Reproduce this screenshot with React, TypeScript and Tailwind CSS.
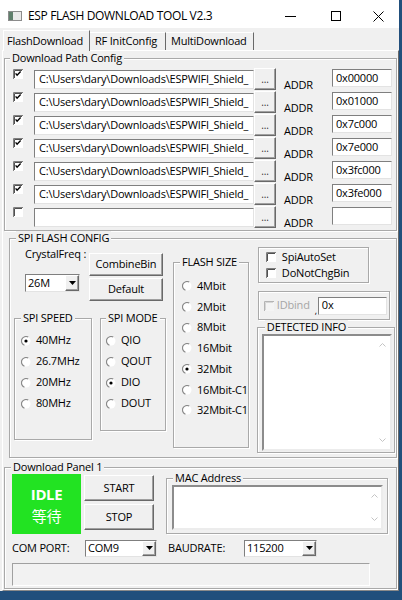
import React from "react";

const raised =
  "bg-[#f0f0f0] border border-t-white border-l-white border-r-[#696969] border-b-[#696969] shadow-[inset_-1px_-1px_0_#a0a0a0]";
const sunken =
  "bg-white border border-t-[#7f7f7f] border-l-[#7f7f7f] border-r-[#e3e3e3] border-b-[#e3e3e3]";
const deep =
  "bg-white border-2 border-t-[#8c8c8c] border-l-[#8c8c8c] border-r-[#ececec] border-b-[#ececec]";
const etched = "border border-[#a9a9a9] shadow-[inset_1px_1px_0_#fff,1px_1px_0_#fff]";

const PATH = "C:\\Users\\dary\\Downloads\\ESPWIFI_Shield_";
const ROWS = [
  { on: true, path: PATH, addr: "0x00000" },
  { on: true, path: PATH, addr: "0x01000" },
  { on: true, path: PATH, addr: "0x7c000" },
  { on: true, path: PATH, addr: "0x7e000" },
  { on: true, path: PATH, addr: "0x3fc000" },
  { on: true, path: PATH, addr: "0x3fe000" },
  { on: false, path: "", addr: "" },
];

function Check({ on = false, dim = false }: { on?: boolean; dim?: boolean }) {
  return (
    <svg width="10" height="10" viewBox="0 0 10 10" className="block shrink-0">
      <rect width="10" height="10" fill={dim ? "#f4f4f4" : "#fff"} />
      <path d="M0.5 10V0.5H10" fill="none" stroke={dim ? "#b4b4b4" : "#808080"} />
      <path d="M1.5 9V1.5H9" fill="none" stroke={dim ? "#d6d6d6" : "#505050"} />
      {on && <path d="M2.6 4.4L4.1 6.2L7.6 2.6" fill="none" stroke="#000" strokeWidth="1.4" />}
    </svg>
  );
}

function Radio({ on = false }: { on?: boolean }) {
  return (
    <svg width="10" height="10" viewBox="0 0 10 10" className="block shrink-0">
      <circle cx="5" cy="5" r="4.5" fill="#fff" />
      <path d="M7.25 1.1A4.5 4.5 0 1 0 3.46 9.23" fill="none" stroke="#8a8a8a" strokeWidth="1.2" />
      {on && <circle cx="5" cy="5" r="1.6" fill="#000" />}
    </svg>
  );
}

function Group({
  label,
  lm,
  className = "",
  children,
}: {
  label: string;
  lm: string;
  className?: string;
  children?: React.ReactNode;
}) {
  return (
    <fieldset className={`${etched} shrink-0 ${className}`}>
      <legend className={`${lm} px-[2px] leading-[14px] bg-[#f0f0f0]`}>{label}</legend>
      {children}
    </fieldset>
  );
}

function Combo({ value, className = "" }: { value: string; className?: string }) {
  return (
    <div className={`${sunken} flex items-stretch ${className}`}>
      <span className="flex-1 pl-[2px] flex items-center">{value}</span>
      <span className={`${raised} w-[14px] flex items-center justify-center`}>
        <svg width="7" height="4" viewBox="0 0 7 4">
          <path d="M0 0H7L3.5 4Z" fill="#000" />
        </svg>
      </span>
    </div>
  );
}

function ScrollBox({ className = "" }: { className?: string }) {
  return (
    <div className={`${deep} flex justify-end ${className}`}>
      <div className="w-[14px] h-full flex flex-col justify-between items-center py-[7px]">
        <svg width="7" height="4" viewBox="0 0 7 4">
          <path d="M0.5 3.5L3.5 0.5L6.5 3.5" fill="none" stroke="#c4c4c4" />
        </svg>
        <svg width="7" height="4" viewBox="0 0 7 4">
          <path d="M0.5 0.5L3.5 3.5L6.5 0.5" fill="none" stroke="#c4c4c4" />
        </svg>
      </div>
    </div>
  );
}

function RadioList({ items, sel, ml, h, pt }: { items: string[]; sel: string; ml: string; h: string; pt: string }) {
  return (
    <div className={`flex flex-col ${pt}`}>
      {items.map((t) => (
        <div key={t} className={`flex items-center ${h} ${ml}`}>
          <Radio on={t === sel} />
          <span className="ml-[5px] whitespace-nowrap">{t}</span>
        </div>
      ))}
    </div>
  );
}

export default function App() {
  return (
    <div className="w-[402px] h-[600px] overflow-hidden bg-[#f0f0f0] flex flex-col border-r-[3px] border-b-[9px] border-r-[#214f7c] border-b-[#214f7c] text-[11px] text-black font-['Open_Sans','Noto_Sans_CJK_SC',sans-serif] tracking-[-0.2px]">
      {/* title bar */}
      <div className="h-[28px] shrink-0 bg-white flex items-center pt-[4px]">
        <svg width="14" height="10" viewBox="0 0 14 10" className="ml-[8px]">
          <rect x="0.5" y="0.5" width="13" height="9" fill="#e9e9e9" stroke="#8c8c8c" />
          <rect x="1" y="1" width="4" height="8" fill="#5f7f6c" />
        </svg>
        <span className="ml-[6px] text-[12px] tracking-[-0.35px] leading-[16px]">ESP FLASH DOWNLOAD TOOL V2.3</span>
        <div className="ml-auto flex items-center mr-[15px]">
          <span className="w-[11px] h-px bg-black" />
          <span className="ml-[35px] w-[10px] h-[10px] border border-black" />
          <svg width="11" height="11" viewBox="0 0 11 11" className="ml-[32px]">
            <path d="M0.5 0.5L10.5 10.5M10.5 0.5L0.5 10.5" stroke="#000" strokeWidth="1" />
          </svg>
        </div>
      </div>

      {/* tabs */}
      <div className="h-[22px] shrink-0 flex items-end pl-[3px]">
        <div className="relative z-10 -mb-px h-[21px] w-[87px] bg-[#f0f0f0] border-l border-t border-r border-l-white border-t-white border-r-[#696969] pl-[3px] flex items-center leading-[14px]">
          FlashDownload
        </div>
        <div className="h-[18px] w-[76px] border-t border-r border-t-white border-r-[#696969] pl-[5px] pb-[2px] flex items-center leading-[14px]">
          RF InitConfig
        </div>
        <div className="h-[18px] w-[88px] border-t border-r border-t-white border-r-[#696969] pl-[5px] pb-[2px] flex items-center leading-[14px]">
          MultiDownload
        </div>
      </div>

      {/* tab page */}
      <div className="flex-1 ml-[2px] w-[397px] border border-t-white border-l-white border-r-[#696969] border-b-[#8a8a8a] flex flex-col">
        <Group label="Download Path Config" lm="ml-[5px]" className="ml-[1px] w-[393px] pt-[3px] pb-px">
          {ROWS.map((r, i) => (
            <div key={i} className="flex items-start h-[23px]">
              <div className="ml-[8px] mt-[1px]">
                <Check on={r.on} />
              </div>
              <div className={`${sunken} ml-[11px] mt-[2px] w-[220px] h-[19px] pl-[4px] flex items-center overflow-hidden whitespace-nowrap`}>
                {r.path}
              </div>
              <div className={`${raised} w-[22px] h-[22px] flex items-center justify-center text-[10px] text-[#333]`}>...</div>
              <div className="w-[56px] pl-[8px] mt-[10px] leading-[14px]">ADDR</div>
              <div className={`${sunken} w-[60px] h-[18px] mt-[1px] pl-[3px] flex items-center`}>{r.addr}</div>
            </div>
          ))}
        </Group>

        <Group label="SPI FLASH CONFIG" lm="ml-[6px]" className="ml-[6px] w-[388px] h-[227px]">
          <div className="flex items-start">
            {/* left part */}
            <div className="w-[163px] flex flex-col">
              <div className="h-[66px] flex items-start">
                <div className="ml-[15px] w-[64px] flex flex-col">
                  <span className="mt-[2px] leading-[14px] whitespace-nowrap">CrystalFreq :</span>
                  <Combo value="26M" className="mt-[13px] w-[55px] h-[18px]" />
                </div>
                <div className="w-[74px] flex flex-col">
                  <div className={`${raised} mt-[8px] h-[23px] flex items-center justify-center`}>CombineBin</div>
                  <div className={`${raised} mt-[2px] h-[23px] flex items-center justify-center`}>Default</div>
                </div>
              </div>
              <div className="flex items-start">
                <Group label="SPI SPEED" lm="ml-[6px]" className="ml-[4px] w-[78px] h-[129px]">
                  <RadioList items={["40MHz", "26.7MHz", "20MHz", "80MHz"]} sel="40MHz" ml="ml-[6px]" h="h-[21px]" pt="pt-[5px]" />
                </Group>
                <Group label="SPI MODE" lm="ml-[5px]" className="ml-[8px] w-[66px] h-[120px]">
                  <RadioList items={["QIO", "QOUT", "DIO", "DOUT"]} sel="DIO" ml="ml-[5px]" h="h-[21px]" pt="pt-[5px]" />
                </Group>
              </div>
            </div>

            {/* flash size */}
            <Group label="FLASH SIZE" lm="ml-[6px]" className="mt-[10px] w-[74px] h-[193px]">
              <RadioList
                items={["4Mbit", "2Mbit", "8Mbit", "16Mbit", "32Mbit", "16Mbit-C1", "32Mbit-C1"]}
                sel="32Mbit"
                ml="ml-[8px]"
                h="h-[20.7px]"
                pt="pt-[7px]"
              />
            </Group>

            {/* right column */}
            <div className="ml-[8px] w-[138px] flex flex-col">
              <div className={`${etched} mt-[2px] ml-[1px] w-[111px] h-[36px] pt-px`}>
                <div className="h-[16px] flex items-center pl-[7px]">
                  <Check />
                  <span className="ml-[6px]">SpiAutoSet</span>
                </div>
                <div className="h-[16px] flex items-center pl-[7px]">
                  <Check />
                  <span className="ml-[6px]">DoNotChgBin</span>
                </div>
              </div>
              <div className={`${etched} mt-[8px] ml-[1px] w-[132px] h-[29px] flex items-center pl-[5px]`}>
                <Check dim />
                <span className="ml-[3px] w-[38px] text-[#a6a6a6]">IDbind</span>
                <span className="w-[3px] text-[9px] leading-none self-end mb-[4px]">,</span>
                <div className={`${sunken} w-[69px] h-[18px] pl-[3px] flex items-center`}>0x</div>
              </div>
              <Group label="DETECTED INFO" lm="ml-[7px]" className="w-[138px] h-[133px]">
                <ScrollBox className="ml-[4px] w-[130px] h-[117px]" />
              </Group>
            </div>
          </div>
        </Group>

        <Group label="Download Panel 1" lm="ml-[6px]" className="mt-[2px] ml-[1px] w-[393px] h-[129px]">
          <div className="flex items-start h-[60px]">
            <div className="ml-[7px] w-[69px] h-[60px] bg-[#22e322] text-white flex flex-col items-center pt-[10px]">
              <span className="block h-[20px] text-[15px] font-bold leading-[20px] tracking-[-0.4px]">IDLE</span>
              <span className="block h-[24px] text-[15px] leading-[24px] font-['Noto_Sans_CJK_SC',sans-serif]">等待</span>
            </div>
            <div className="ml-[3px] w-[70px] flex flex-col">
              <div className={`${raised} mt-px h-[26px] flex items-center justify-center`}>START</div>
              <div className={`${raised} mt-[3px] h-[26px] flex items-center justify-center`}>STOP</div>
            </div>
            <Group label="MAC Address" lm="ml-[6px]" className="ml-[12px] -mt-[3px] w-[222px] h-[63px]">
              <ScrollBox className="ml-[5px] w-[211px] h-[45px]" />
            </Group>
          </div>
          <div className="mt-[4px] h-[20px] flex items-center">
            <span className="ml-[7px] w-[73px]">COM PORT:</span>
            <Combo value="COM9" className="w-[72px] h-[17px]" />
            <span className="ml-[11px] w-[76px]">BAUDRATE:</span>
            <Combo value="115200" className="w-[73px] h-[17px]" />
          </div>
          <div className="mt-[5px] ml-[7px] w-[358px] h-[23px] bg-[#f2f2f2] border border-t-[#a0a0a0] border-l-[#a0a0a0] border-r-white border-b-white" />
        </Group>
      </div>
    </div>
  );
}
